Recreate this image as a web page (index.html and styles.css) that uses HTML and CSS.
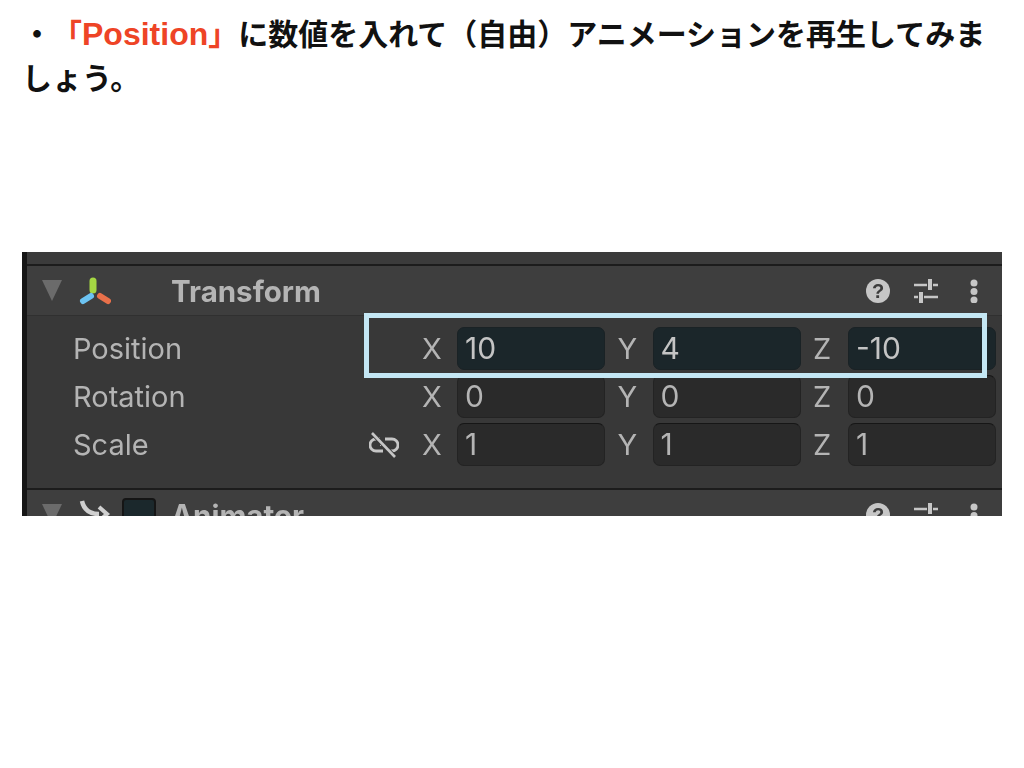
FILE: index.html
```html
<!DOCTYPE html>
<html lang="ja">
<head>
    <meta charset="UTF-8">
    <meta name="viewport" content="width=device-width, initial-scale=1.0">
    <title>Position</title>
    <link rel="stylesheet" href="styles.css">
</head>
<body>
    <svg class="defs" width="0" height="0">
        <symbol id="icon-help" viewBox="0 0 24 24">
            <circle cx="12" cy="12" r="12" fill="#c6c6c6"/>
            <text x="12" y="19" text-anchor="middle" class="help-mark">?</text>
        </symbol>
        <symbol id="icon-sliders" viewBox="0 0 24 24">
            <path d="M0 6h13M19 6h5M0 18h4M10 18h14" stroke="#c6c6c6" stroke-width="2.5" fill="none"/>
            <path d="M14 0h4v11h-4zM5 13h4v11H5z" fill="#c6c6c6"/>
        </symbol>
        <symbol id="icon-dots" viewBox="0 0 8 24">
            <circle cx="4" cy="4" r="3.5" fill="#c6c6c6"/>
            <circle cx="4" cy="12.5" r="3.5" fill="#c6c6c6"/>
            <circle cx="4" cy="21" r="3.5" fill="#c6c6c6"/>
        </symbol>
    </svg>

    <p class="note">・<span class="accent">「<span class="accent-word">Position</span>」</span>に数値を入れて（自由）アニメーションを再生してみましょう。</p>

    <div class="inspector">
        <div class="top-strip"></div>

        <div class="comp-header">
            <div class="foldout"></div>
            <svg class="comp-icon" width="34" height="30" viewBox="0 0 34 30">
                <path d="M16 5v9" stroke="#a5d743" stroke-width="7" stroke-linecap="round"/>
                <path d="M6 25l8-5" stroke="#6cc3f2" stroke-width="6" stroke-linecap="round"/>
                <path d="M23 20l8 5" stroke="#e8704a" stroke-width="6" stroke-linecap="round"/>
            </svg>
            <div class="swatch-space"></div>
            <div class="comp-title">Transform</div>
            <div class="comp-actions">
                <svg class="act-help" width="24" height="24"><use href="#icon-help"/></svg>
                <svg class="act-sliders" width="24" height="24"><use href="#icon-sliders"/></svg>
                <svg class="act-dots" width="8" height="24"><use href="#icon-dots"/></svg>
            </div>
        </div>

        <div class="comp-body">
            <div class="row">
                <div class="row-label">Position</div>
                <div class="row-link"></div>
                <div class="axes">
                    <div class="axis"><span class="axis-name">X</span><div class="field keyed">10</div></div>
                    <div class="axis"><span class="axis-name">Y</span><div class="field keyed">4</div></div>
                    <div class="axis"><span class="axis-name">Z</span><div class="field keyed">-10</div></div>
                </div>
            </div>
            <div class="row">
                <div class="row-label">Rotation</div>
                <div class="row-link"></div>
                <div class="axes">
                    <div class="axis"><span class="axis-name">X</span><div class="field">0</div></div>
                    <div class="axis"><span class="axis-name">Y</span><div class="field">0</div></div>
                    <div class="axis"><span class="axis-name">Z</span><div class="field">0</div></div>
                </div>
            </div>
            <div class="row">
                <div class="row-label">Scale</div>
                <div class="row-link">
                    <svg width="30" height="26" viewBox="0 0 30 26" fill="none" stroke="#c6c6c6" stroke-width="2.8">
                        <path d="M11 7H7a6 6 0 0 0 0 12h7"/>
                        <path d="M16 7h7a6 6 0 0 1 0 12h-4"/>
                        <path d="M11 13h7" stroke-width="2" stroke-dasharray="2 2"/>
                        <path d="M3 1l23 24" stroke="#383838" stroke-width="4.5"/>
                        <path d="M3 1l23 24" stroke-width="2.6"/>
                    </svg>
                </div>
                <div class="axes">
                    <div class="axis"><span class="axis-name">X</span><div class="field">1</div></div>
                    <div class="axis"><span class="axis-name">Y</span><div class="field">1</div></div>
                    <div class="axis"><span class="axis-name">Z</span><div class="field">1</div></div>
                </div>
            </div>
        </div>

        <div class="comp-header next">
            <div class="foldout"></div>
            <svg class="comp-icon" width="34" height="30" viewBox="0 0 34 30" fill="none" stroke="#d0d0d0" stroke-width="4.5">
                <path d="M5 1c2 9 8 13 17 13"/>
                <path d="M22 7l8 7-8 7" stroke-width="4"/>
            </svg>
            <div class="swatch"></div>
            <div class="comp-title">Animator</div>
            <div class="comp-actions">
                <svg class="act-help" width="24" height="24"><use href="#icon-help"/></svg>
                <svg class="act-sliders" width="24" height="24"><use href="#icon-sliders"/></svg>
                <svg class="act-dots" width="8" height="24"><use href="#icon-dots"/></svg>
            </div>
        </div>

        <div class="highlight"></div>
    </div>
</body>
</html>
```

FILE: styles.css
```css
body {
    margin: 0;
    padding: 10px 22px 0;
    background-color: #fff;
    font-family: "Liberation Sans", "Noto Sans CJK JP", sans-serif;
}

.defs {
    position: absolute;
}

.help-mark {
    font-family: "Liberation Sans", sans-serif;
    font-size: 20px;
    font-weight: bold;
    fill: #3c3c3c;
}

.note {
    margin: 0;
    height: 88px;
    font-size: 30px;
    line-height: 44px;
    font-weight: bold;
    color: #111;
    font-family: "Noto Sans CJK JP", sans-serif;
    text-spacing-trim: space-all;
}

.accent {
    color: #ee4426;
}

.accent-word {
    font-family: "Liberation Sans", sans-serif;
    font-size: 32px;
    line-height: 1;
}

/* inspector */
.inspector {
    position: relative;
    margin-top: 154px;
    height: 264px;
    overflow: hidden;
    background-color: #3a3a3a;
    border-left: 5px solid #161616;
    font-family: Inter, sans-serif;
    color: #b4b4b4;
    filter: blur(0.5px);
}

.top-strip {
    height: 12px;
    background-color: #3b3b3b;
    border-bottom: 2px solid #1c1c1c;
}

.comp-header {
    display: flex;
    align-items: center;
    height: 49px;
    padding: 0 24px 0 15px;
    background-color: #3e3e3e;
    border-bottom: 1px solid #303030;
}

.foldout {
    width: 0;
    height: 0;
    border-left: 10.5px solid transparent;
    border-right: 10.5px solid transparent;
    border-top: 21px solid #6b6b6b;
}

.comp-icon {
    margin-left: 15px;
}

.swatch-space,
.swatch {
    width: 34px;
    height: 34px;
    margin-left: 11px;
    box-sizing: border-box;
    flex-shrink: 0;
}

.swatch {
    background-color: #1b282c;
    border: 2px solid #151515;
    border-radius: 4px;
}

.comp-title {
    margin-left: 15px;
    font-size: 29.5px;
    font-weight: 700;
}

.comp-actions {
    display: flex;
    align-items: center;
    margin-left: auto;
}

.act-sliders {
    margin-left: 24px;
}

.act-dots {
    margin-left: 32px;
}

.comp-body {
    height: 161px;
    padding: 11px 0 0 46px;
    background-color: #383838;
    border-bottom: 2px solid #1c1c1c;
}

.row {
    display: grid;
    grid-template-columns: 291px 58px 1fr;
    align-items: center;
    height: 43px;
    margin-bottom: 5px;
}

.row-label,
.axis-name {
    font-size: 29px;
    font-weight: 400;
}

.row-link {
    display: flex;
    padding-left: 5px;
}

.axes {
    display: flex;
    gap: 12.5px;
}

.axis {
    display: flex;
    align-items: center;
}

.axis-name {
    width: 35px;
}

.field {
    box-sizing: border-box;
    width: 148px;
    height: 43px;
    padding-left: 7px;
    font-size: 30px;
    line-height: 41px;
    background-color: #2a2a2a;
    border: 1px solid #232323;
    border-top-color: #161616;
    border-radius: 7px;
}

.field.keyed {
    background-color: #1b262a;
    border-color: #1a2225;
    color: #c4c4c4;
}

.highlight {
    position: absolute;
    left: 337px;
    top: 61px;
    width: 623px;
    height: 65px;
    box-sizing: border-box;
    border: 5px solid #c4e7f4;
}
```
